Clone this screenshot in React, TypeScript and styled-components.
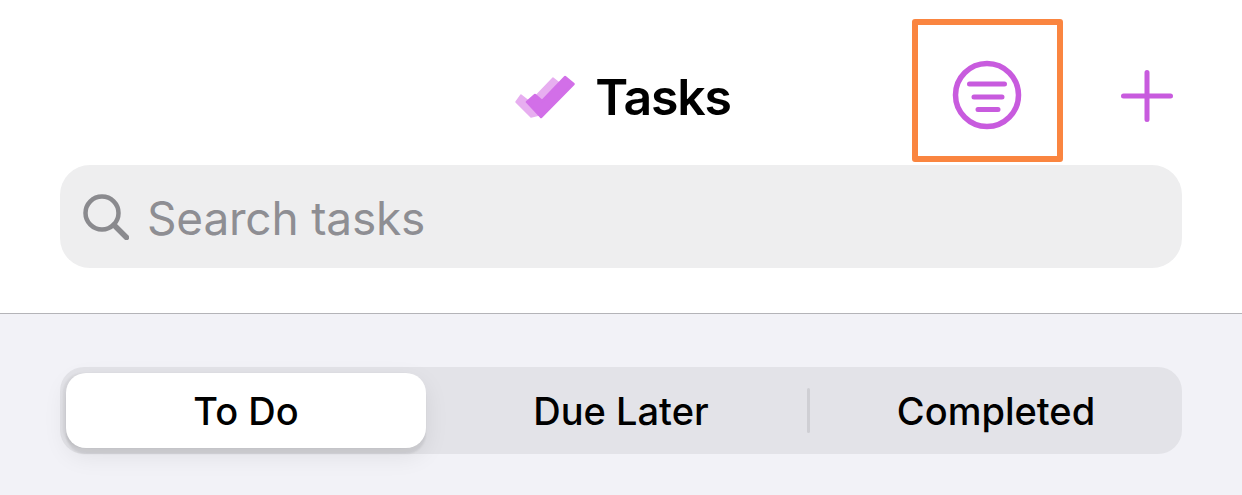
import { createGlobalStyle, styled } from "styled-components";

const GlobalStyle = createGlobalStyle`
  html, body {
    margin: 0;
    padding: 0;
    background: #ffffff;
  }
  body {
    font-family: Inter, "Liberation Sans", sans-serif;
    overflow: hidden;
  }
`;

const Screen = styled.div`
  width: 1242px;
  height: 495px;
  display: flex;
  flex-direction: column;
`;

const Top = styled.header`
  height: 314px;
  box-sizing: border-box;
  padding: 19px 60px 0;
  background: #ffffff;
  border-bottom: 1px solid #b4b4b8;
`;

const NavBar = styled.div`
  display: grid;
  grid-template-columns: 1fr auto 1fr;
  height: 142px;
  margin-bottom: 4px;
`;

const Title = styled.div`
  grid-column: 2;
  display: flex;
  align-items: center;
  gap: 20px;
  padding-top: 12px;
  padding-left: 4px;
`;

const TitleText = styled.h1`
  margin: 0;
  font-size: 50px;
  font-weight: 600;
  letter-spacing: -1.2px;
  line-height: 1;
  color: #000000;
`;

const Actions = styled.div`
  grid-column: 3;
  display: flex;
  justify-content: flex-end;
  align-items: center;
  gap: 58px;
  padding-right: 9px;
`;

const FilterButton = styled.button`
  width: 151px;
  height: 143px;
  box-sizing: border-box;
  padding: 8px 2px 0 0;
  border: 6px solid #fa8540;
  border-radius: 3px;
  background: transparent;
  display: flex;
  align-items: center;
  justify-content: center;
`;

const PlusButton = styled.button`
  padding: 0;
  margin-top: 11px;
  border: 0;
  background: transparent;
  display: flex;
`;

const SearchBar = styled.div`
  height: 103px;
  border-radius: 30px;
  background: #eeeeef;
  display: flex;
  align-items: center;
  gap: 18px;
  padding-left: 23px;
`;

const SearchText = styled.span`
  font-size: 46px;
  letter-spacing: -0.2px;
  padding-top: 3px;
  color: #8e8e93;
`;

const Bottom = styled.section`
  flex: 1;
  background: #f2f2f7;
  padding: 53px 60px 0;
`;

const Segments = styled.div`
  height: 87px;
  box-sizing: border-box;
  padding: 6px;
  border-radius: 24px;
  background: #e3e3e8;
  display: grid;
  grid-template-columns: 360px 384px 1fr;
`;

const Segment = styled.div<{ $active?: boolean; $divider?: boolean }>`
  display: flex;
  align-items: center;
  justify-content: center;
  padding-left: ${(p) => (p.$active ? "0" : "6px")};
  font-size: 38px;
  font-weight: ${(p) => (p.$active ? 500 : 450)};
  color: #000000;
  position: relative;
  border-radius: 20px;
  background: ${(p) => (p.$active ? "#ffffff" : "transparent")};
  box-shadow: ${(p) =>
    p.$active ? "0 8px 24px rgba(0,0,0,0.08), 0 6px 2px rgba(0,0,0,0.07), -3px 0 2px rgba(0,0,0,0.05)" : "none"};

  &::after {
    content: "";
    display: ${(p) => (p.$divider ? "block" : "none")};
    position: absolute;
    right: 0;
    top: 15px;
    bottom: 15px;
    width: 3px;
    border-radius: 2px;
    background: #cfcfd4;
  }
`;

const TasksLogo = () => (
  <svg width="60" height="44" viewBox="0 0 60 44">
    <path
      d="M1 27 L6 20 L15 27 L38 3 L47 10 L24 40 L16 42 Z"
      fill="#e7aef0"
      stroke="#e7aef0"
      strokeWidth="1.5"
      strokeLinejoin="round"
    />
    <path
      d="M12 27 L20 20 L27 26 L50 2 L58.5 9 L26 42 Z"
      fill="#d26fe8"
      stroke="#d26fe8"
      strokeWidth="2.5"
      strokeLinejoin="round"
    />
  </svg>
);

const FilterIcon = () => (
  <svg width="70" height="70" viewBox="0 0 70 70" fill="none" stroke="#c85bde" strokeLinecap="round">
    <circle cx="35" cy="35" r="31.5" strokeWidth="5.5" />
    <path d="M17.5 24H52.5M22 37H50M26 49.5H46" strokeWidth="5" />
  </svg>
);

const PlusIcon = () => (
  <svg width="52" height="52" viewBox="0 0 52 52" fill="none" stroke="#c85bde" strokeWidth="5" strokeLinecap="round">
    <path d="M26 2.5V49.5M2.5 26H49.5" />
  </svg>
);

const SearchIcon = () => (
  <svg width="46" height="46" viewBox="0 0 46 46" fill="none" stroke="#8a8a8e" strokeLinecap="round">
    <circle cx="19" cy="19" r="16.5" strokeWidth="4.5" />
    <path d="M31 31L43.5 43.5" strokeWidth="5.5" />
  </svg>
);

export default function App() {
  return (
    <Screen>
      <GlobalStyle />
      <Top>
        <NavBar>
          <Title>
            <TasksLogo />
            <TitleText>Tasks</TitleText>
          </Title>
          <Actions>
            <FilterButton>
              <FilterIcon />
            </FilterButton>
            <PlusButton>
              <PlusIcon />
            </PlusButton>
          </Actions>
        </NavBar>
        <SearchBar>
          <SearchIcon />
          <SearchText>Search tasks</SearchText>
        </SearchBar>
      </Top>
      <Bottom>
        <Segments>
          <Segment $active>To Do</Segment>
          <Segment $divider>Due Later</Segment>
          <Segment>Completed</Segment>
        </Segments>
      </Bottom>
    </Screen>
  );
}
